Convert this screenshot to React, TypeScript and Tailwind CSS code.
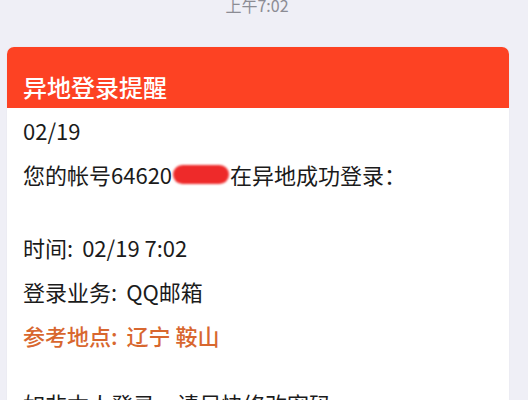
function Colon() {
  return <span className="mr-[9px]">:</span>;
}

export default function App() {
  return (
    <div className="h-[400px] w-[528px] overflow-hidden bg-[#efeff6] font-['Noto_Sans_CJK_SC',sans-serif]">
      {/* 时间 */}
      <div className="-mt-[7px] h-[54px] text-center text-[16px] leading-[24px] text-[#8c8c94]">
        <span className="ml-[-14px]">上午7:02</span>
      </div>

      {/* 卡片 */}
      <div className="ml-[7px] w-[502px] overflow-hidden rounded-[7px] bg-white shadow-[0_0_2px_rgba(0,0,0,0.06)]">
        <div className="flex h-[61px] items-end bg-[#fd4223] px-[16px] pb-[4px]">
          <h2 className="text-[24px] leading-[34px] font-medium text-white">异地登录提醒</h2>
        </div>

        <div className="px-[16px] text-[22px] leading-[44px] text-[#1b1b1b]">
          <p>02/19</p>
          <p className="flex items-center">
            您的帐号64620
            <span className="mx-[1px] inline-block h-[19px] w-[56px] rounded-[10px] bg-[#ee2a2a] blur-[1px]" />
            在异地成功登录：
          </p>
          <p className="mt-[29px]">
            时间<Colon />02/19 7:02
          </p>
          <p>
            登录业务<Colon />QQ邮箱
          </p>
          <p className="font-medium text-[#d8672f]">
            参考地点<Colon />辽宁 鞍山
          </p>
          <p className="mt-[24px]">如非本人登录，请尽快修改密码。</p>
        </div>
      </div>
    </div>
  );
}
